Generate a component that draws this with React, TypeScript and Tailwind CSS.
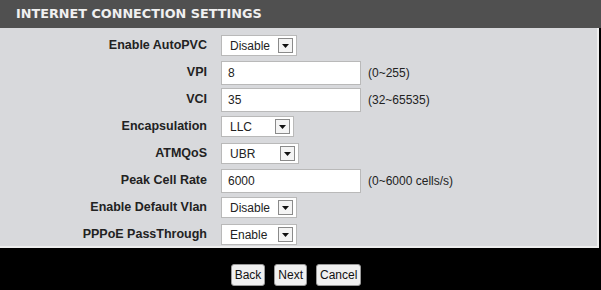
import React from "react";

const Arrow = () => (
  <span className="ml-auto mr-[3px] flex h-[15px] w-[15px] items-center justify-center border border-[#8a8a8a] bg-[#f4f4f4]">
    <svg width="7" height="4" viewBox="0 0 7 4"><path d="M0 0h7L3.5 4z" fill="#111" /></svg>
  </span>
);

const Select = ({ value, w }: { value: string; w: string }) => (
  <div className={`flex h-[21px] items-center border border-[#b9b9b9] bg-white pl-[8px] text-[12px] text-[#222] ${w}`}>
    <span>{value}</span>
    <Arrow />
  </div>
);

const Input = ({ value }: { value: string }) => (
  <div className="flex h-[24px] w-[140px] items-center border border-[#b9b9b9] bg-white pl-[6px] text-[12px] text-[#222]">{value}</div>
);

const Row = ({ label, children, hint }: { label: string; children: React.ReactNode; hint?: string }) => (
  <div className="flex h-[27px] items-center">
    <div className="w-[207px] text-right text-[12.5px] font-bold text-[#222]">{label}</div>
    <div className="ml-[14px] flex items-center">
      {children}
      {hint && <span className="ml-[7px] text-[12px] text-[#222]">{hint}</span>}
    </div>
  </div>
);

const Btn = ({ t }: { t: string }) => (
  <button className="h-[22px] rounded-[3px] border border-[#9a9a9a] bg-[#f0f0f0] px-[3px] text-[12px] text-[#111]">{t}</button>
);

export default function App() {
  return (
    <div className="h-[290px] w-[601px] overflow-hidden bg-black font-['Liberation_Sans',sans-serif]">
      <div className="flex h-[28px] items-center bg-[#505050] pl-[16px] font-['DejaVu_Sans',sans-serif] text-[12.8px] font-bold text-[#f0f0f0]">
        INTERNET CONNECTION SETTINGS
      </div>
      <div className="mr-[2px] h-[220px] border-b-2 border-r-2 border-[#eeeeee] bg-[#d8d9dc] pt-[4px]">
        <Row label="Enable AutoPVC"><Select value="Disable" w="w-[76px]" /></Row>
        <Row label="VPI" hint="(0~255)"><Input value="8" /></Row>
        <Row label="VCI" hint="(32~65535)"><Input value="35" /></Row>
        <Row label="Encapsulation"><Select value="LLC" w="w-[73px]" /></Row>
        <Row label="ATMQoS"><Select value="UBR" w="w-[78px]" /></Row>
        <Row label="Peak Cell Rate" hint="(0~6000 cells/s)"><Input value="6000" /></Row>
        <Row label="Enable Default Vlan"><Select value="Disable" w="w-[76px]" /></Row>
        <Row label="PPPoE PassThrough"><Select value="Enable" w="w-[76px]" /></Row>
      </div>
      <div className="flex justify-center gap-[9px] pt-[16px] pr-[9px]">
        <Btn t="Back" />
        <Btn t="Next" />
        <Btn t="Cancel" />
      </div>
    </div>
  );
}
